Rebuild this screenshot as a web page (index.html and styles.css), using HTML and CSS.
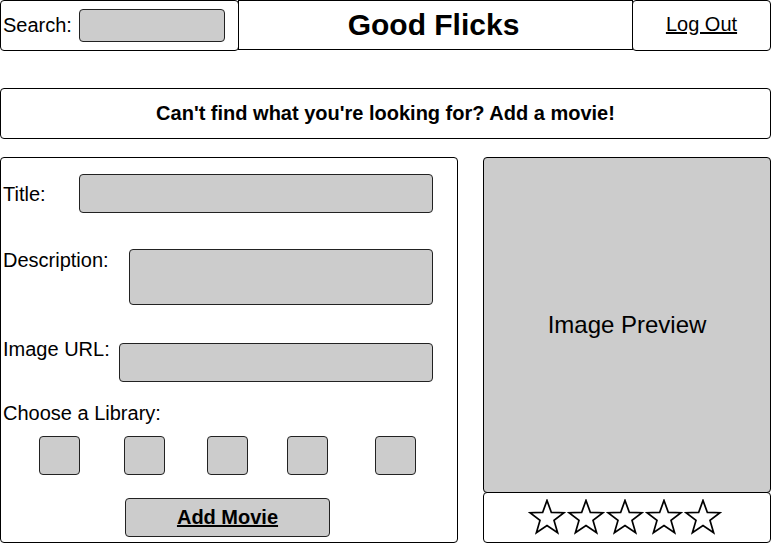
FILE: index.html
```html
<!DOCTYPE html>
<html lang="en">
<head>
  <meta charset="UTF-8">
  <title>Good Flicks</title>
  <link rel="stylesheet" href="styles.css">
</head>
<body>
  <!-- Barra do topo -->
  <div class="topbar">
    <div class="box search-box">
      <span class="label">Search:</span>
      <div class="field search-field"></div>
    </div>
    <div class="box brand">Good Flicks</div>
    <div class="box logout"><a href="#">Log Out</a></div>
  </div>

  <div class="box banner">Can't find what you're looking for? Add a movie!</div>

  <div class="main">
    <!-- Formulario -->
    <div class="box form-panel">
      <div class="row row-title">
        <span class="label">Title:</span>
        <div class="field title-field"></div>
      </div>
      <div class="row row-desc">
        <span class="label">Description:</span>
        <div class="field desc-field"></div>
      </div>
      <div class="row row-url">
        <span class="label">Image URL:</span>
        <div class="field url-field"></div>
      </div>
      <div class="label library-label">Choose a Library:</div>
      <div class="libraries">
        <div class="field lib"></div>
        <div class="field lib"></div>
        <div class="field lib"></div>
        <div class="field lib"></div>
        <div class="field lib"></div>
      </div>
      <a class="field add-btn" href="#">Add Movie</a>
    </div>

    <!-- Preview e estrelas -->
    <div class="side">
      <div class="box preview">Image Preview</div>
      <div class="box stars">
        <svg class="star" viewBox="0 0 40 38"><polygon points="20,1.5 24.6,14.2 38,14.5 27.4,22.6 31.2,35.6 20,28 8.8,35.6 12.6,22.6 2,14.5 15.4,14.2"/></svg>
        <svg class="star" viewBox="0 0 40 38"><polygon points="20,1.5 24.6,14.2 38,14.5 27.4,22.6 31.2,35.6 20,28 8.8,35.6 12.6,22.6 2,14.5 15.4,14.2"/></svg>
        <svg class="star" viewBox="0 0 40 38"><polygon points="20,1.5 24.6,14.2 38,14.5 27.4,22.6 31.2,35.6 20,28 8.8,35.6 12.6,22.6 2,14.5 15.4,14.2"/></svg>
        <svg class="star" viewBox="0 0 40 38"><polygon points="20,1.5 24.6,14.2 38,14.5 27.4,22.6 31.2,35.6 20,28 8.8,35.6 12.6,22.6 2,14.5 15.4,14.2"/></svg>
        <svg class="star" viewBox="0 0 40 38"><polygon points="20,1.5 24.6,14.2 38,14.5 27.4,22.6 31.2,35.6 20,28 8.8,35.6 12.6,22.6 2,14.5 15.4,14.2"/></svg>
      </div>
    </div>
  </div>
</body>
</html>
```

FILE: styles.css
```css
* {
  margin: 0;
  padding: 0;
  box-sizing: border-box;
}

html, body {
  width: 771px;
  height: 543px;
  overflow: hidden;
  background: white;
  font-family: 'Liberation Sans', Arial, sans-serif;
  color: black;
}

.box {
  border: 1px solid black;
  border-radius: 4px;
  background: white;
}

.field {
  background: #cccccc;
  border: 1px solid #222;
  border-radius: 4px;
}

.label {
  font-size: 20px;
  line-height: 23px;
}

/* Barra do topo */
.topbar {
  display: flex;
  height: 51px;
}

.search-box {
  width: 239px;
  display: flex;
  align-items: center;
  padding-left: 2px;
  padding-bottom: 1px;
}

.search-field {
  width: 146px;
  height: 33px;
  margin-left: 7px;
}

.brand {
  flex: 1;
  margin: 0 -1px;
  display: flex;
  align-items: center;
  justify-content: center;
  font-size: 30px;
  font-weight: bold;
  padding: 0 4px 1px 0;
  border-radius: 0;
  height: 50px;
}

.logout {
  width: 139px;
  display: flex;
  align-items: center;
  justify-content: center;
  padding-bottom: 2px;
}

.logout a {
  color: black;
  font-size: 20px;
}

.banner {
  margin-top: 37px;
  height: 51px;
  display: flex;
  align-items: center;
  justify-content: center;
  font-size: 20px;
  font-weight: bold;
  padding-bottom: 1px;
}

/* Area principal */
.main {
  display: flex;
  gap: 25px;
  margin-top: 18px;
  height: 386px;
}

.form-panel {
  width: 458px;
  height: 386px;
  padding: 16px 24px 0 2px;
}

.row {
  display: flex;
}

.row-title {
  align-items: center;
}

.row-title .label {
  width: 76px;
  padding-top: 1px;
}

.title-field {
  flex: 1;
  height: 39px;
}

.row-desc {
  margin-top: 36px;
  align-items: flex-start;
}

.row-desc .label {
  width: 126px;
}

.desc-field {
  flex: 1;
  height: 56px;
}

.row-url {
  margin-top: 38px;
  align-items: flex-start;
}

.row-url .label {
  width: 116px;
  margin-top: -5px;
}

.url-field {
  flex: 1;
  height: 39px;
}

.library-label {
  margin-top: 20px;
}

.libraries {
  display: flex;
  padding-left: 36px;
  margin-top: 11px;
}

.lib {
  width: 41px;
  height: 39px;
}

.lib:nth-child(2) { margin-left: 44px; }
.lib:nth-child(3) { margin-left: 42px; }
.lib:nth-child(4) { margin-left: 39px; }
.lib:nth-child(5) { margin-left: 47px; }

.add-btn {
  display: flex;
  align-items: center;
  justify-content: center;
  width: 205px;
  height: 39px;
  margin: 23px 0 0 122px;
  color: black;
  font-size: 20px;
  font-weight: bold;
  text-decoration: underline;
}

.side {
  width: 288px;
  display: flex;
  flex-direction: column;
}

.preview {
  height: 336px;
  background: #cccccc;
  display: flex;
  align-items: center;
  justify-content: center;
  font-size: 24px;
}

.stars {
  height: 51px;
  margin-top: -1px;
  display: flex;
  align-items: center;
  justify-content: center;
  gap: 1px;
  padding: 0 4px 1px 0;
}

.star {
  width: 38px;
  height: 36px;
}

.star polygon {
  fill: white;
  stroke: black;
  stroke-width: 1.8;
  stroke-linejoin: miter;
}
```
